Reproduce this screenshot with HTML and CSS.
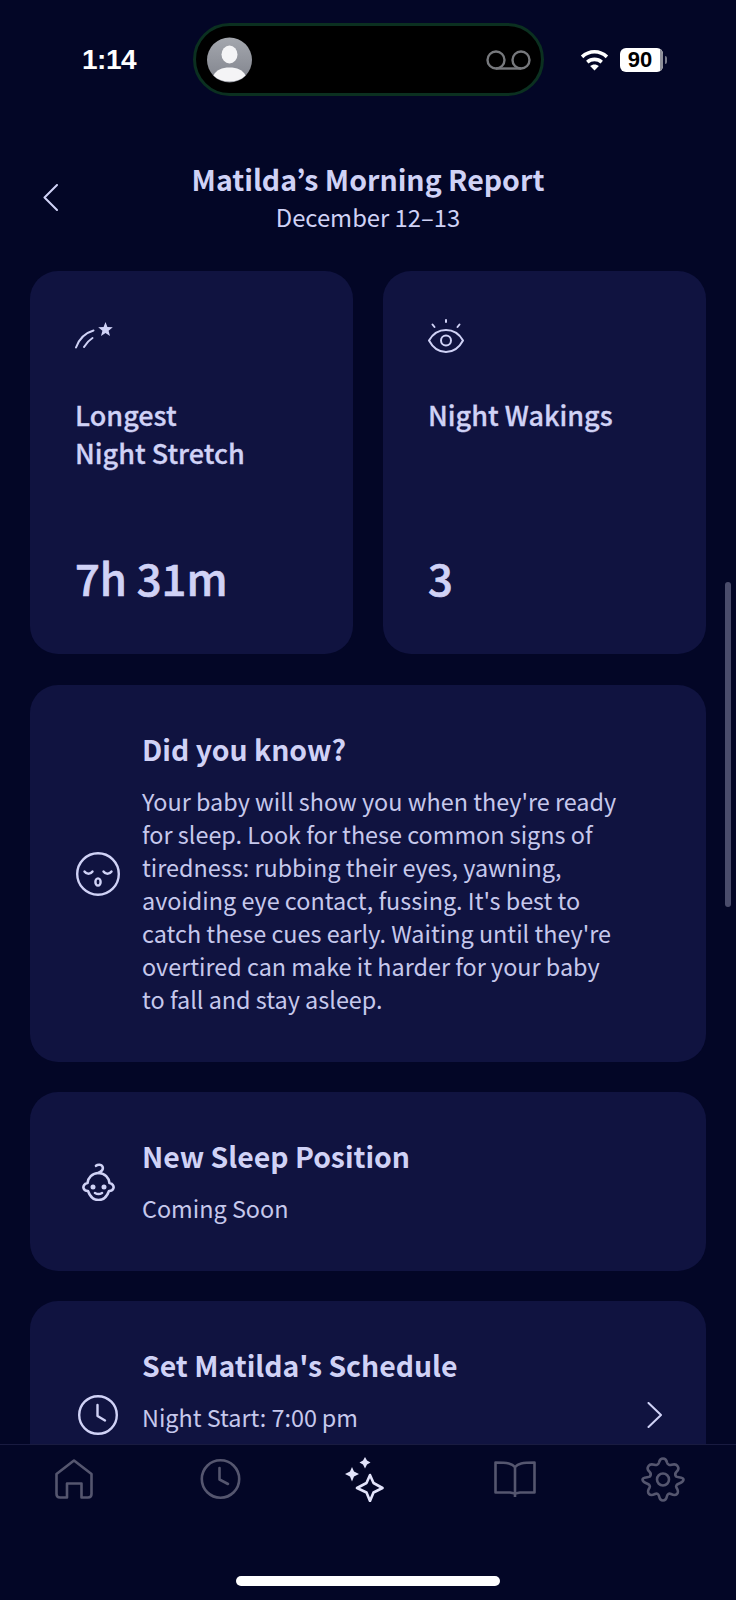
FILE: index.html
```html
<!DOCTYPE html>
<html lang="en">
<head>
    <meta charset="UTF-8">
    <meta name="viewport" content="width=device-width, initial-scale=1.0">
    <title>Morning Report</title>
    <link rel="stylesheet" href="styles.css">
</head>
<body>
    <div class="phone">
        <!-- Status bar -->
        <div class="status-bar">
            <span class="time">1:14</span>
            <div class="island">
                <svg class="avatar" viewBox="0 0 45 46">
                    <defs>
                        <linearGradient id="avatarFill" x1="0" y1="0" x2="0" y2="1">
                            <stop offset="0" stop-color="#a4a7ae"/>
                            <stop offset="1" stop-color="#80838c"/>
                        </linearGradient>
                    </defs>
                    <circle cx="22.5" cy="23" r="22.5" fill="url(#avatarFill)"/>
                    <ellipse cx="22.5" cy="17.5" rx="8" ry="9" fill="#f4f4f6"/>
                    <path d="M6.5 38.500C9 33 15 30.500 22.500 30.500S36 33 38.500 38.500C34.500 42.500 29 44.500 22.500 44.500S10.500 42.500 6.500 38.500Z" fill="#f4f4f6"/>
                </svg>
                <svg class="voicemail" viewBox="0 0 45 20" fill="none" stroke="#77797d" stroke-width="2.400">
                    <circle cx="10" cy="10" r="8.500"/>
                    <circle cx="35" cy="10" r="8.500"/>
                    <path d="M10 18.500H35"/>
                </svg>
            </div>
            <svg class="wifi" viewBox="0 0 28 22" fill="none" stroke="#fff" stroke-width="3.400">
                <path d="M2 8.500C9 2 19 2 26 8.500"/>
                <path d="M7 13.500C11 10 17 10 21 13.500"/>
                <path d="M14 21.500L9.800 17.300C12 15.300 16 15.300 18.200 17.300Z" fill="#fff" stroke="none"/>
            </svg>
            <div class="battery">
                <span class="battery-level">90</span>
                <span class="battery-rest"></span>
            </div>
            <span class="battery-nub"></span>
        </div>

        <div class="content">
            <header class="report-header">
                <svg class="back" viewBox="0 0 15 27" fill="none" stroke="#d0d2f6" stroke-width="2" stroke-linecap="round" stroke-linejoin="round">
                    <path d="M14 1L1.500 13.500L14 26"/>
                </svg>
                <h1>Matilda’s Morning Report</h1>
                <p>December 12–13</p>
            </header>

            <div class="stats">
                <div class="card stat">
                    <svg class="icon-stretch" viewBox="0 0 38 27" fill="none" stroke="#d0d2f6" stroke-width="2" stroke-linecap="round">
                        <path d="M1 25.500C4 17 10 11 18.500 8.500"/>
                        <path d="M9 25C11 21.500 13.500 18.500 17.500 16"/>
                        <path d="M30.500 0L32.400 5L37.800 5.300L33.600 8.700L35 14L30.500 11L26 14L27.400 8.700L23.200 5.300L28.600 5Z" fill="#d0d2f6" stroke="none"/>
                    </svg>
                    <h2>Longest<br>Night Stretch</h2>
                    <div class="value">7h 31m</div>
                </div>
                <div class="card stat">
                    <svg class="icon-eye" viewBox="0 0 36 34" fill="none" stroke="#d0d2f6" stroke-width="2" stroke-linecap="round" stroke-linejoin="round">
                        <path d="M1 21.500C5 14.500 11 11 18 11S31 14.500 35 21.500C31 29 25 33 18 33S5 29 1 21.500Z"/>
                        <circle cx="18" cy="21.500" r="5"/>
                        <path d="M18 1V3M4.500 5.500L6.500 8M31.500 5.500L29.500 8"/>
                    </svg>
                    <h2>Night Wakings</h2>
                    <div class="value">3</div>
                </div>
            </div>

            <div class="card row tip">
                <svg class="row-icon" viewBox="0 0 44 46" fill="none" stroke="#d0d2f6" stroke-width="2.400" stroke-linecap="round">
                    <circle cx="22" cy="23" r="20.800"/>
                    <path d="M8.500 20.500C10.500 23.500 14.500 23.500 16.500 20.500"/>
                    <path d="M27.500 20.500C29.500 23.500 33.500 23.500 35.500 20.500"/>
                    <ellipse cx="22" cy="31" rx="2.600" ry="3.600"/>
                </svg>
                <div class="row-text">
                    <h3>Did you know?</h3>
                    <p>Your baby will show you when they're ready for sleep. Look for these common signs of tiredness: rubbing their eyes, yawning, avoiding eye contact, fussing. It's best to catch these cues early. Waiting until they're overtired can make it harder for your baby to fall and stay asleep.</p>
                </div>
            </div>

            <div class="card row sleep">
                <svg class="row-icon" viewBox="0 0 44 38" fill="none" stroke="#d0d2f6" stroke-width="2.600" stroke-linecap="round" stroke-linejoin="round">
                    <path d="M22.500 10C26.500 8 27.500 5.500 26.500 3.500C25.500 1.500 22 1 20 2.800"/>
                    <path d="M22.500 10C29 10 33 15 33.500 20C36.500 20.500 38 23 37.500 25C37 27 35.500 28 33 28C31 33.500 27 37 22.500 37S14 33.500 12 28C9.500 28 8 27 7.500 25C7 23 8.500 20.500 11.500 20C12 15 16 10 22.500 10Z"/>
                    <circle cx="17" cy="24" r="1.200" fill="#d0d2f6"/>
                    <circle cx="28" cy="24" r="1.200" fill="#d0d2f6"/>
                    <path d="M19 30C21 31.200 24 31.200 26 30"/>
                </svg>
                <div class="row-text">
                    <h3>New Sleep Position</h3>
                    <p>Coming Soon</p>
                </div>
            </div>

            <div class="card row schedule">
                <svg class="row-icon clock-icon" viewBox="0 0 40 40" fill="none" stroke="#d0d2f6" stroke-width="2.400" stroke-linecap="round" stroke-linejoin="round">
                    <circle cx="20" cy="20" r="18.800"/>
                    <path d="M19.500 10V21L27 25.500"/>
                </svg>
                <div class="row-text">
                    <h3>Set Matilda's Schedule</h3>
                    <p>Night Start: 7:00&#8201;pm</p>
                </div>
                <svg class="chevron" viewBox="0 0 15 26" fill="none" stroke="#d0d2f6" stroke-width="2" stroke-linecap="round" stroke-linejoin="round">
                    <path d="M1.500 1L14 13L1.500 25"/>
                </svg>
            </div>
        </div>

        <!-- Bottom navigation -->
        <nav class="tab-bar">
            <svg class="tab-home" viewBox="0 0 38 40" fill="none" stroke="#55566f" stroke-width="2.600" stroke-linejoin="round">
                <path d="M19 1.500L36.500 15V35C36.500 37.500 35.500 38.500 33 38.500H26.500V24.500H12V38.500H5C2.500 38.500 1.500 37.500 1.500 35V15Z"/>
            </svg>
            <svg class="tab-clock" viewBox="0 0 41 40" fill="none" stroke="#55566f" stroke-width="2.600" stroke-linecap="round" stroke-linejoin="round">
                <circle cx="20.500" cy="20" r="18.700"/>
                <path d="M19.500 9V20.500L28 25"/>
            </svg>
            <svg class="tab-spark" viewBox="0 0 40 45" fill="none">
                <path d="M20 0L22 3.500L25.500 5.500L22 7.500L20 11.500L18 7.500L14.500 5.500L18 3.500Z" fill="#e3e4fb"/>
                <path d="M7 10L9 14.500L14 17L9 19.500L7 24.500L5 19.500L0 17L5 14.500Z" fill="#e3e4fb"/>
                <path d="M25 18L28.500 26L37.500 31L28.500 35.500L25 44L21.500 35.500L12 31L21.500 26Z" stroke="#e3e4fb" stroke-width="2.600" stroke-linejoin="round"/>
            </svg>
            <svg class="tab-book" viewBox="0 0 42 37" fill="none" stroke="#55566f" stroke-width="2.600" stroke-linejoin="round">
                <path d="M21 6C18 2.500 14 1.500 1.500 1.500V31.500H16L21 32.500L26 31.500H40.500V1.500C28 1.500 24 2.500 21 6Z"/>
                <path d="M21 6V36"/>
            </svg>
            <svg class="tab-gear" viewBox="0 0 44 45" fill="none" stroke="#55566f" stroke-width="2.600" stroke-linejoin="round">
                <path d="M22 1.500C24.500 1.500 25.500 3 26 5.500C26.500 7.500 28.500 8.500 30.500 7.800C33 7 35 6.800 36.500 9C38 11 37.500 13 35.500 14.800C34 16.200 34 18 35 19.500C36.500 20.500 42.500 20 42.500 22.500C42.500 25 40.500 25.500 38 26.500C35.500 27.500 34.500 29 35.500 30.800C37 33 38 35 36 37C34 39 32 38 30 37C28 36 26.500 37 26 39C25.500 41.500 24.500 43.500 22 43.500S18.500 41.500 18 39C17.500 37 16 36 14 37C12 38 10 39 8 37C6 35 7 33 8.500 30.800C9.500 29 8.500 27.500 6 26.500C3.500 25.500 1.500 25 1.500 22.500C1.500 20 7.500 20.500 9 19.500C10 18 10 16.200 8.500 14.800C6.500 13 6 11 7.500 9C9 6.800 11 7 13.500 7.800C15.500 8.500 17.500 7.500 18 5.500C18.500 3 19.500 1.500 22 1.500Z"/>
                <circle cx="22" cy="22.500" r="6"/>
            </svg>
        </nav>
        <div class="home-area"><span class="home-indicator"></span></div>

        <span class="scrollbar"></span>
    </div>
</body>
</html>
```

FILE: styles.css
```css
* {
    box-sizing: border-box;
}

body {
    margin: 0;
    background-color: #030626;
    font-family: "Noto Sans CJK JP", "Noto Sans", sans-serif;
    color: #d0d2f6;
}

svg {
    display: block;
    flex-shrink: 0;
}

.phone {
    position: relative;
    display: flex;
    flex-direction: column;
    width: 736px;
    height: 1600px;
    overflow: hidden;
}

/* Status bar */
.status-bar {
    display: flex;
    align-items: center;
    flex-shrink: 0;
    height: 119px;
    padding: 0 0 0 82px;
}

.time {
    width: 111px;
    font-family: "Liberation Sans", Arial, sans-serif;
    font-size: 28px;
    font-weight: 700;
    color: #fff;
    letter-spacing: -0.5px;
}

.island {
    display: flex;
    align-items: center;
    justify-content: space-between;
    width: 351px;
    height: 73px;
    padding: 0 10px 0 11px;
    background: #000;
    border: 3px solid #0b3020;
    border-radius: 37px;
}

.avatar {
    width: 45px;
    height: 46px;
}

.voicemail {
    width: 45px;
    height: 20px;
}

.wifi {
    width: 29px;
    height: 23px;
    margin-left: 36px;
}

.battery {
    display: flex;
    width: 43px;
    height: 24px;
    margin-left: 11px;
    border-radius: 6px;
    overflow: hidden;
    background: #fff;
}

.battery-level {
    width: 40px;
    font-family: "Liberation Sans", Arial, sans-serif;
    font-size: 22px;
    font-weight: 700;
    line-height: 24px;
    text-align: center;
    color: #000;
}

.battery-rest {
    width: 3px;
    background: #8e8f99;
}

.battery-nub {
    width: 2px;
    height: 8px;
    margin-left: 2px;
    background: #77798a;
    border-radius: 0 2px 2px 0;
}

/* Scroll area */
.content {
    flex: 1;
    min-height: 0;
    overflow: hidden;
    padding: 0 30px;
}

.report-header {
    position: relative;
    height: 152px;
    padding-top: 40px;
    text-align: center;
}

.report-header h1 {
    margin: 0;
    font-size: 28.5px;
    font-weight: 700;
    line-height: 40px;
}

.report-header p {
    margin: 0;
    font-size: 23.8px;
    line-height: 35px;
}

.back {
    position: absolute;
    left: 13px;
    top: 65px;
    width: 15px;
    height: 27px;
}

.stats {
    display: grid;
    grid-template-columns: 323px 323px;
    gap: 30px;
    margin-bottom: 31px;
}

.card {
    background: #101340;
    border-radius: 28px;
}

.stat {
    display: flex;
    flex-direction: column;
    height: 383px;
    padding: 48px 45px 44px;
}

.icon-stretch {
    width: 38px;
    height: 27px;
    margin-top: 3px;
    margin-bottom: 47px;
}

.icon-eye {
    width: 36px;
    height: 34px;
    margin-bottom: 43px;
}

.stat h2 {
    margin: 0;
    font-size: 27px;
    font-weight: 500;
    line-height: 38px;
    -webkit-text-stroke: 0.3px #d0d2f6;
}

.value {
    margin-top: auto;
    font-size: 43.6px;
    font-weight: 500;
    line-height: 66px;
    -webkit-text-stroke: 0.7px #d0d2f6;
}

.row {
    display: flex;
    align-items: center;
    gap: 22px;
    margin-bottom: 30px;
    padding: 0 30px 0 46px;
}

.row-text {
    flex: 1;
    padding-bottom: 2px;
}

.row-text h3 {
    margin: 0 0 16px;
    font-size: 28.4px;
    font-weight: 700;
    line-height: 40px;
}

.row-text p {
    margin: 0;
    font-size: 23.4px;
    line-height: 33px;
    color: #c6c8ec;
}

.row-icon {
    width: 44px;
}

.tip {
    height: 377px;
}

.tip p {
    width: 480px;
}

.sleep {
    height: 179px;
}

.schedule {
    height: 178px;
    align-items: flex-start;
    padding-top: 44px;
}

.clock-icon {
    width: 40px;
    height: 40px;
    margin: 50px 2px 0;
}

.chevron {
    width: 15px;
    height: 26px;
    margin-top: 57px;
    margin-right: 14px;
}

/* Bottom navigation */
.tab-bar {
    display: flex;
    align-items: flex-start;
    flex-shrink: 0;
    height: 99px;
    padding-left: 55px;
    background: #030626;
    border-top: 1px solid #191b40;
}

.tab-home {
    width: 38px;
    height: 40px;
    margin-top: 14px;
}

.tab-clock {
    width: 41px;
    height: 40px;
    margin-top: 14px;
    margin-left: 107px;
}

.tab-spark {
    width: 40px;
    height: 45px;
    margin-top: 12px;
    margin-left: 104px;
}

.tab-book {
    width: 42px;
    height: 37px;
    margin-top: 16px;
    margin-left: 109px;
}

.tab-gear {
    width: 44px;
    height: 45px;
    margin-top: 12px;
    margin-left: 105px;
}

.home-area {
    display: flex;
    justify-content: center;
    flex-shrink: 0;
    height: 57px;
    padding-top: 33px;
}

.home-indicator {
    width: 264px;
    height: 10px;
    background: #fff;
    border-radius: 5px;
}

.scrollbar {
    position: absolute;
    left: 725px;
    top: 582px;
    width: 6px;
    height: 325px;
    background: #4a4c6b;
    border-radius: 3px;
}
```
